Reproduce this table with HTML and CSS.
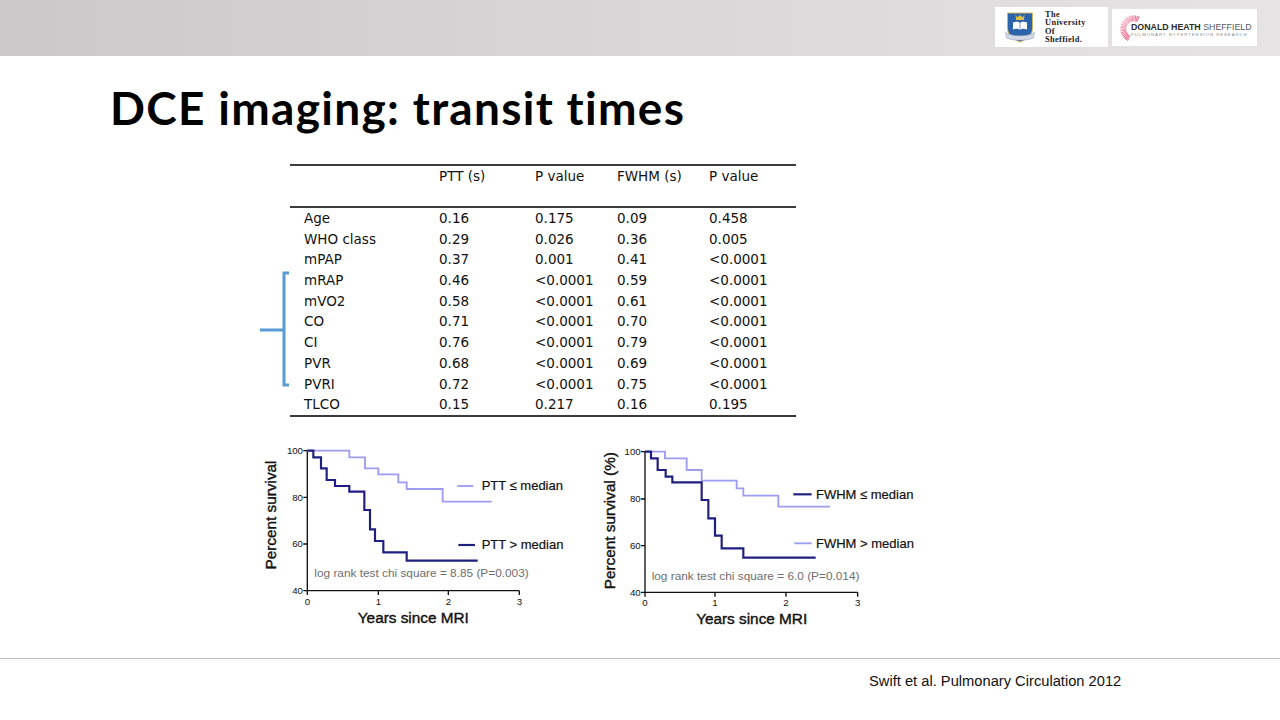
FILE: index.html
```html
<!DOCTYPE html>
<html lang="en">
<head>
<meta charset="utf-8">
<title>DCE imaging: transit times</title>
<link rel="stylesheet" href="styles.css">
</head>
<body>
<header class="topbar">
  <div class="logo uni">
    <svg class="shield" width="30" height="32" viewBox="0 0 30 32">
      <path d="M2.5 2 H27.5 V17 C27.5 24.5 21 28.5 15 31 C9 28.5 2.5 24.5 2.5 17 Z" fill="#2c63ad" stroke="#d7b948" stroke-width="0.9"/>
      <path d="M10.5 3.5 L12.3 6.5 L15 4 L17.7 6.5 L19.5 3.5 L19 9 H11 Z" fill="#e2c044"/>
      <path d="M8 11.5 C10.5 10.3 13.3 10.3 15 12 C16.7 10.3 19.5 10.3 22 11.5 V18.5 C19.5 17.3 16.7 17.3 15 19 C13.3 17.3 10.5 17.3 8 18.5 Z" fill="#fff"/>
      <path d="M15 12 V19" stroke="#2c63ad" stroke-width="0.6"/>
      <path d="M0.5 21.5 C5 23.8 9 24.8 15 24.8 C21 24.8 25 23.8 29.5 21.5 L28.5 27 C24 28.6 20 29.2 15 29.2 C10 29.2 6 28.6 1.5 27 Z" fill="#d3d9e6" stroke="#8a95aa" stroke-width="0.5"/>
    </svg>
    <div class="uni-text">
      <span>The</span>
      <span>University</span>
      <span>Of</span>
      <span>Sheffield.</span>
    </div>
  </div>
  <div class="logo dh">
    <svg class="ring" width="28" height="32" viewBox="0 0 28 32">
      <defs>
        <linearGradient id="rg" x1="0" y1="0" x2="1" y2="1">
          <stop offset="0" stop-color="#f7c2d0"/>
          <stop offset="0.45" stop-color="#e8648a"/>
          <stop offset="1" stop-color="#cc2452"/>
        </linearGradient>
      </defs>
      <path d="M21.4 7.4 A10.5 10.5 0 1 0 12.2 26.3" fill="none" stroke="url(#rg)" stroke-width="6" stroke-dasharray="0.9 0.5"/>
    </svg>
    <div class="dh-text">
      <div class="dh-name"><b>DONALD HEATH</b> SHEFFIELD</div>
      <div class="dh-sub">PULMONARY HYPERTENSION RESEARCH</div>
    </div>
  </div>
</header>

<main class="slide">
  <h1 class="title">DCE imaging: transit times</h1>

  <section class="table-row">
    <svg class="bracket" width="30" height="253" viewBox="0 0 30 253">
      <path d="M29 109 H24 V221 H29 M0 166 H24" fill="none" stroke="#5b9bd5" stroke-width="3"/>
    </svg>
    <div class="tbl">
      <div class="trow thead">
        <span></span><span>PTT (s)</span><span>P value</span><span>FWHM (s)</span><span>P value</span>
      </div>
      <div class="tbody">
        <div class="trow"><span>Age</span><span>0.16</span><span>0.175</span><span>0.09</span><span>0.458</span></div>
        <div class="trow"><span>WHO class</span><span>0.29</span><span>0.026</span><span>0.36</span><span>0.005</span></div>
        <div class="trow"><span>mPAP</span><span>0.37</span><span>0.001</span><span>0.41</span><span>&lt;0.0001</span></div>
        <div class="trow"><span>mRAP</span><span>0.46</span><span>&lt;0.0001</span><span>0.59</span><span>&lt;0.0001</span></div>
        <div class="trow"><span>mVO2</span><span>0.58</span><span>&lt;0.0001</span><span>0.61</span><span>&lt;0.0001</span></div>
        <div class="trow"><span>CO</span><span>0.71</span><span>&lt;0.0001</span><span>0.70</span><span>&lt;0.0001</span></div>
        <div class="trow"><span>CI</span><span>0.76</span><span>&lt;0.0001</span><span>0.79</span><span>&lt;0.0001</span></div>
        <div class="trow"><span>PVR</span><span>0.68</span><span>&lt;0.0001</span><span>0.69</span><span>&lt;0.0001</span></div>
        <div class="trow"><span>PVRI</span><span>0.72</span><span>&lt;0.0001</span><span>0.75</span><span>&lt;0.0001</span></div>
        <div class="trow"><span>TLCO</span><span>0.15</span><span>0.217</span><span>0.16</span><span>0.195</span></div>
      </div>
    </div>
  </section>

  <section class="charts">
    <svg class="chart" width="310" height="200" viewBox="0 0 930 600">
      <g class="axis">
        <path d="M157 47 V467 H793"/>
        <path d="M145 47 H157 M145 187 H157 M145 327 H157 M145 467 H157 M157 467 V480 M370 467 V480 M580 467 V480 M793 467 V480"/>
      </g>
      <g class="ticklabel" text-anchor="end">
        <text x="144" y="57">100</text>
        <text x="144" y="197">80</text>
        <text x="144" y="337">60</text>
        <text x="144" y="477">40</text>
      </g>
      <g class="ticklabel" text-anchor="middle">
        <text x="157" y="509">0</text>
        <text x="370" y="509">1</text>
        <text x="580" y="509">2</text>
        <text x="793" y="509">3</text>
      </g>
      <text class="axlabel" transform="translate(62,240) rotate(-90)" text-anchor="middle">Percent survival</text>
      <text class="axlabel" x="475" y="564" text-anchor="middle">Years since MRI</text>
      <path class="light" d="M157 47 H283 V67 H330 V100 H370 V118 H430 V142 H455 V162 H563 V200 H710"/>
      <path class="dark" d="M157 47 H175 V67 H198 V100 H215 V135 H240 V153 H283 V170 H328 V225 H345 V283 H360 V318 H385 V352 H455 V377 H668"/>
      <path class="light" d="M607 153 H655"/>
      <text class="legend" x="680" y="166">PTT ≤ median</text>
      <path class="dark" d="M610 330 H660"/>
      <text class="legend" x="680" y="343">PTT &gt; median</text>
      <text class="logrank" x="178" y="425">log rank test chi square = 8.85 (P=0.003)</text>
    </svg>

    <svg class="chart" width="320" height="200" viewBox="0 0 960 600">
      <g class="axis">
        <path d="M150 50 V472 H788"/>
        <path d="M138 50 H150 M138 192 H150 M138 332 H150 M138 472 H150 M150 472 V485 M360 472 V485 M573 472 V485 M788 472 V485"/>
      </g>
      <g class="ticklabel" text-anchor="end">
        <text x="137" y="60">100</text>
        <text x="137" y="202">80</text>
        <text x="137" y="342">60</text>
        <text x="137" y="482">40</text>
      </g>
      <g class="ticklabel" text-anchor="middle">
        <text x="150" y="514">0</text>
        <text x="360" y="514">1</text>
        <text x="573" y="514">2</text>
        <text x="788" y="514">3</text>
      </g>
      <text class="axlabel" transform="translate(60,257) rotate(-90)" text-anchor="middle">Percent survival (%)</text>
      <text class="axlabel" x="470" y="568" text-anchor="middle">Years since MRI</text>
      <path class="light" d="M150 50 H210 V70 H275 V105 H320 V137 H425 V160 H445 V182 H550 V215 H705"/>
      <path class="dark" d="M150 50 H168 V70 H188 V105 H212 V125 H232 V142 H320 V195 H340 V250 H360 V302 H380 V340 H445 V368 H662"/>
      <path class="dark" d="M595 178 H650"/>
      <text class="legend" x="663" y="191">FWHM ≤ median</text>
      <path class="light" d="M598 325 H650"/>
      <text class="legend" x="663" y="338">FWHM &gt; median</text>
      <text class="logrank" x="170" y="435">log rank test chi square = 6.0 (P=0.014)</text>
    </svg>
  </section>
</main>

<footer class="footer">
  <div class="rule"></div>
  <p class="cite">Swift et al. Pulmonary Circulation 2012</p>
</footer>
</body>
</html>
```

FILE: styles.css
```css
html, body {
  margin: 0;
  padding: 0;
}
body {
  width: 1280px;
  height: 720px;
  overflow: hidden;
  background: #ffffff;
  font-family: "Liberation Sans", Arial, sans-serif;
  color: #000;
}

/* header band */
.topbar {
  height: 56px;
  box-sizing: border-box;
  background: linear-gradient(to right, #cac8c8 0%, #d8d5d6 45%, #e6e3e4 100%);
  display: flex;
  justify-content: flex-end;
  align-items: flex-start;
  padding: 7px 22px 0 0;
  gap: 3px;
}
.logo {
  background: #fff;
  display: flex;
  align-items: center;
  box-sizing: border-box;
}
.uni {
  width: 113px;
  height: 40px;
  padding-left: 10px;
  gap: 10px;
}
.shield {
  display: block;
}
.uni-text {
  display: flex;
  flex-direction: column;
  font-family: "Liberation Serif", "DejaVu Serif", serif;
  font-weight: bold;
  font-size: 8.4px;
  line-height: 8.4px;
  letter-spacing: 0.35px;
  color: #1a1a1a;
  margin-top: 1px;
}
.dh {
  width: 147px;
  height: 39px;
  margin-top: 1px;
  border: 1px solid #e3e3e3;
  padding-left: 5px;
}
.ring {
  display: block;
  margin-right: -14px;
}
.dh-text {
  display: flex;
  flex-direction: column;
  margin-top: 5px;
}
.dh-name {
  font-family: "Liberation Sans", Arial, sans-serif;
  font-size: 8.8px;
  line-height: 10px;
  color: #5a5a5a;
  white-space: nowrap;
}
.dh-name b {
  color: #2b2b2b;
  font-weight: bold;
}
.dh-sub {
  font-family: "Liberation Sans", Arial, sans-serif;
  font-size: 4.3px;
  line-height: 6px;
  letter-spacing: 0.95px;
  color: #8a8a8a;
  white-space: nowrap;
}

/* title */
.title {
  margin: 0;
  height: 104px;
  line-height: 104px;
  padding-left: 110px;
  font-family: "Lato", "Open Sans", sans-serif;
  font-weight: 700;
  font-size: 46px;
  letter-spacing: 1.3px;
  font-variant-ligatures: none;
  color: #000;
}

/* table */
.table-row {
  display: flex;
  align-items: flex-start;
  margin-left: 260px;
  margin-top: 4px;
}
.bracket {
  display: block;
  flex: none;
}
.tbl {
  width: 506px;
  border-top: 2px solid #3c3c3c;
  border-bottom: 2px solid #3c3c3c;
  font-family: "DejaVu Sans", "Noto Sans", sans-serif;
  font-size: 13.5px;
  color: #111;
}
.trow {
  display: grid;
  grid-template-columns: 135px 96px 82px 92px 1fr;
  padding-left: 14px;
  height: 20.7px;
  line-height: 20.7px;
  white-space: nowrap;
}
.thead {
  height: 40px;
  line-height: 20px;
  border-bottom: 2px solid #3c3c3c;
}

/* charts */
.charts {
  display: flex;
  gap: 30px;
  margin-left: 255px;
  margin-top: 18px;
}
.chart {
  display: block;
  font-family: "Liberation Sans", Arial, sans-serif;
}
.axis path {
  fill: none;
  stroke: #111;
  stroke-width: 4;
}
.ticklabel text {
  font-size: 29px;
  fill: #111;
}
.axlabel {
  font-size: 46px;
  fill: #111;
  stroke: #111;
  stroke-width: 1.2;
}
.legend {
  font-size: 39px;
  fill: #111;
  stroke: #111;
  stroke-width: 0.6;
}
.logrank {
  font-size: 35.5px;
  fill: #6e6e6e;
}
.light {
  fill: none;
  stroke: #9c9cf0;
  stroke-width: 5.5;
}
.dark {
  fill: none;
  stroke: #1f1f80;
  stroke-width: 6.5;
}

/* footer */
.footer {
  margin-top: 23px;
}
.rule {
  height: 1px;
  background: #bdbdbd;
}
.cite {
  margin: 14px 0 0 869px;
  font-size: 14.7px;
  line-height: 16px;
  color: #111;
}
```
